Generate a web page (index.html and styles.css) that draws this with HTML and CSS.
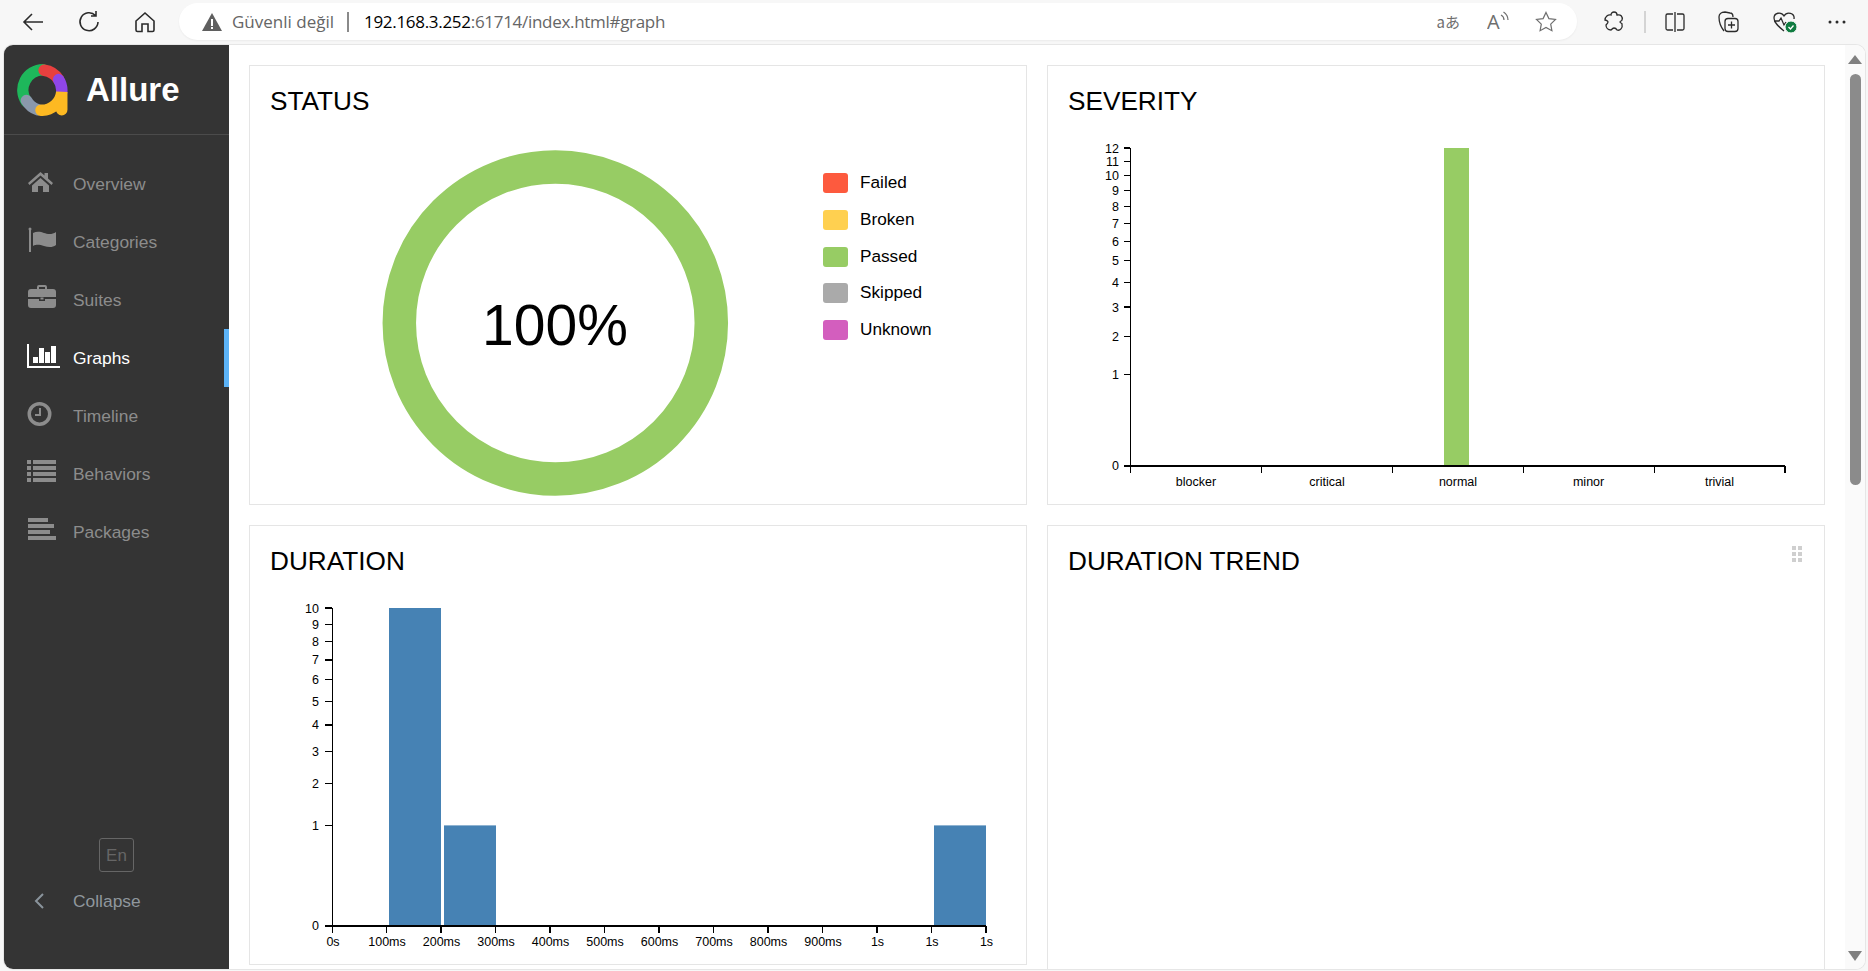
FILE: index.html
```html
<!DOCTYPE html>
<html lang="tr">
<head>
<meta charset="utf-8">
<title>Allure Report</title>
<link rel="stylesheet" href="styles.css">
</head>
<body>
<header class="toolbar">
  <div class="nav-buttons">
    <svg class="tb-icon" width="24" height="24" viewBox="0 0 24 24"><path d="M22 12H3M11 4l-8 8 8 8" class="stroke-dark"/></svg>
    <svg class="tb-icon" width="24" height="24" viewBox="0 0 24 24"><path d="M18.500 5.500A9 9 0 1 0 21 12M19 1v5h-5" class="stroke-dark"/></svg>
    <svg class="tb-icon" width="24" height="24" viewBox="0 0 24 24"><path d="M3 11l9-8 9 8v9a1.500 1.500 0 0 1-1.500 1.500H15V14H9v7.500H4.500A1.500 1.500 0 0 1 3 20z" class="stroke-dark"/></svg>
  </div>
  <div class="address">
    <svg class="warn" width="22" height="20" viewBox="0 0 22 20"><path d="M11 1l10 18H1z" fill="#5f5f5f"/><rect x="10" y="7" width="2" height="7" fill="#fff"/><rect x="10" y="15" width="2" height="2" fill="#fff"/></svg>
    <span class="insecure">Güvenli değil</span>
    <span class="url-sep"></span>
    <span class="url"><b class="host">192.168.3.252</b>:61714/index.html#graph</span>
    <span class="addr-actions">
      <span class="translate">aあ</span>
      <svg class="read-icon" width="22" height="30" viewBox="0 0 22 30"><text x="0" y="21.500" class="read-a">A</text><path d="M14 8c2 1 3 3 3 5M16.500 5c3 2 4.500 5 4.500 8" class="stroke-grey"/></svg>
      <svg class="star-icon" width="22" height="22" viewBox="0 0 22 22"><path d="M11 1.500l2.900 6.100 6.600.9-4.800 4.600 1.200 6.600-5.900-3.200-5.900 3.200 1.200-6.600L1.500 8.500l6.600-.9z" class="stroke-grey"/></svg>
    </span>
  </div>
  <div class="tb-right">
    <svg width="20" height="22" viewBox="0 0 20 22"><path d="M7 4c0-4 6-4 6 0 4-1 6 2 5 5 0 1-2 1-2 2s2 1 2 2c1 4-2 7-5 6-1-2-2-2-3-2s-2 1-3 2c-3 0-5-2-5-5 1-1 2-2 2-3S2 9 1 9c0-3 3-6 6-5z" class="stroke-dark thin"/></svg>
    <span class="tb-sep"></span>
    <svg width="22" height="22" viewBox="0 0 22 22"><path d="M9 3H3.500A1.500 1.500 0 0 0 2 4.500v13A1.500 1.500 0 0 0 3.500 19H9M13 3h5.500A1.500 1.500 0 0 1 20 4.500v13a1.500 1.500 0 0 1-1.500 1.500H13M11 1v20" class="stroke-dark thin"/></svg>
    <svg width="24" height="24" viewBox="0 0 24 24"><path d="M7 21C3 16 2 10 2 7c0-3 2-5 6-5l5 1c2 0 3 2 3 4" class="stroke-dark thin"/><rect x="8" y="8.500" width="13" height="13" rx="3" class="stroke-dark thin"/><path d="M14.500 11.500v7M11 15h7" class="stroke-dark thin"/></svg>
    <svg width="26" height="24" viewBox="0 0 26 24"><path d="M11 21C6 17 1 13 1 8c0-5 7-7 10-2 3-5 11-3 10 3M1 11h5l2-3 3 7 2-3" class="stroke-dark thin"/><circle cx="18" cy="17" r="6" fill="#107c41" stroke="#f7f7f7"/><path d="M15.500 17l2 2 3-3.500" fill="none" stroke="#fff" stroke-width="1.300"/></svg>
    <svg class="dots" width="18" height="6" viewBox="0 0 18 6"><circle cx="2" cy="3" r="1.500"/><circle cx="9" cy="3" r="1.500"/><circle cx="16" cy="3" r="1.500"/></svg>
  </div>
</header>

<div class="window">
  <aside class="sidebar">
    <div class="brand">
      <svg class="logo" width="52" height="52" viewBox="0 0 50 50">
        <g fill="none" stroke-width="11" stroke-linecap="round">
          <path d="M10 36A19.500 19.500 0 0 1 26 5.500" stroke="#1eb75b"/>
          <path d="M27 6A19.500 19.500 0 0 1 41 15" stroke="#e8403f"/>
          <path d="M41 15A19.500 19.500 0 0 1 44 27" stroke="#8f46e8"/>
          <path d="M10 35A19.500 19.500 0 0 0 21 44" stroke="#8a98ab"/>
          <path d="M24 44.500A19.500 19.500 0 0 0 44 27V44" stroke="#fdb922"/>
        </g>
      </svg>
      <span class="brand-name">Allure</span>
    </div>
    <nav class="menu">
      <a class="menu-item">
        <svg class="mi" width="34" height="32" viewBox="0 0 34 32"><path d="M13.500 4L1 15l1.500 2L13.500 7.500 24.500 17l1.500-2-5-4.500V5h-3.500v2.500z"/><path d="M5 17.500L13.500 10l8.500 7.500V24h-6v-6h-5v6H5z"/></svg>
        <span>Overview</span>
      </a>
      <a class="menu-item">
        <svg class="mi" width="34" height="32" viewBox="0 0 34 32"><rect x="2" y="3" width="2" height="23"/><circle cx="3" cy="3" r="1.500"/><path d="M6 7c4-2 8-1 11 0s8 2 12-1v13c-4 3-8 2-12 1s-7-2-11 0z"/></svg>
        <span>Categories</span>
      </a>
      <a class="menu-item">
        <svg class="mi" width="34" height="32" viewBox="0 0 34 32"><path d="M10 5V3a2 2 0 0 1 2-2h6a2 2 0 0 1 2 2v2h-2V3h-6v2z"/><path d="M4 5h22a3 3 0 0 1 3 3v5H1V8a3 3 0 0 1 3-3z"/><path d="M1 15h11v2h6v-2h11v6a3 3 0 0 1-3 3H4a3 3 0 0 1-3-3z"/><rect x="13.500" y="13.500" width="3" height="2"/></svg>
        <span>Suites</span>
      </a>
      <a class="menu-item active">
        <svg class="mi" width="34" height="32" viewBox="0 0 34 32"><rect x="0" y="2" width="2" height="24"/><rect x="0" y="24" width="33" height="2"/><rect x="6" y="15" width="5" height="6"/><rect x="12" y="6" width="5" height="15"/><rect x="18" y="10" width="5" height="11"/><rect x="24" y="4" width="5" height="17"/></svg>
        <span>Graphs</span>
      </a>
      <a class="menu-item">
        <svg class="mi" width="34" height="32" viewBox="0 0 34 32"><path fill-rule="evenodd" d="M12.500 2a12 12 0 1 1 0 24 12 12 0 0 1 0-24zm0 3.500a8.500 8.500 0 1 0 0 17 8.500 8.500 0 0 0 0-17z"/><path d="M12 8h2v8H8v-2h4z"/></svg>
        <span>Timeline</span>
      </a>
      <a class="menu-item">
        <svg class="mi" width="34" height="32" viewBox="0 0 34 32"><rect x="0" y="2" width="4" height="4"/><rect x="6" y="2" width="23" height="4"/><rect x="0" y="8" width="4" height="4"/><rect x="6" y="8" width="23" height="4"/><rect x="0" y="14" width="4" height="4"/><rect x="6" y="14" width="23" height="4"/><rect x="0" y="20" width="4" height="4"/><rect x="6" y="20" width="23" height="4"/></svg>
        <span>Behaviors</span>
      </a>
      <a class="menu-item">
        <svg class="mi" width="34" height="32" viewBox="0 0 34 32"><rect x="1" y="2" width="20" height="4"/><rect x="1" y="8" width="26" height="4"/><rect x="1" y="14" width="22" height="4"/><rect x="1" y="20" width="28" height="4"/></svg>
        <span>Packages</span>
      </a>
    </nav>
    <div class="side-foot">
      <button class="lang">En</button>
      <a class="menu-item collapse">
        <svg class="mi" width="34" height="32" viewBox="0 0 34 32"><path d="M16 9l-7 7 7 7" fill="none" stroke="#8a949c" stroke-width="2"/></svg>
        <span>Collapse</span>
      </a>
    </div>
  </aside>

  <main class="content">
    <section class="card">
      <h2 class="card-title">STATUS</h2>
      <div class="status-body">
        <svg class="donut" width="573" height="388" viewBox="0 0 573 388">
          <circle cx="305.300" cy="207" r="156" fill="none" stroke="#97cc64" stroke-width="33.500"/>
          <text x="305" y="229" class="donut-label">100%</text>
        </svg>
        <ul class="legend">
          <li><i class="swatch failed"></i><span>Failed</span></li>
          <li><i class="swatch broken"></i><span>Broken</span></li>
          <li><i class="swatch passed"></i><span>Passed</span></li>
          <li><i class="swatch skipped"></i><span>Skipped</span></li>
          <li><i class="swatch unknown"></i><span>Unknown</span></li>
        </ul>
      </div>
    </section>

    <section class="card">
      <h2 class="card-title">SEVERITY</h2>
      <svg class="chart" width="776" height="388" viewBox="0 0 776 388">
        <rect x="396" y="32" width="25" height="318" fill="#97cc64"/>
        <g class="axis">
          <path d="M82.500 32V350"/>
          <path class="base" d="M82 350H737"/>
          <path d="M76 350h6M76 258.200h6M76 220.200h6M76 191h6M76 166.400h6M76 144.700h6M76 125.100h6M76 107.100h6M76 90.400h6M76 74.600h6M76 59.700h6M76 45.500h6M76 32h6"/>
          <path d="M82.500 350v7M213.400 350v7M344.300 350v7M475.200 350v7M606.100 350v7M737 350v7"/>
        </g>
        <g class="ylabels">
          <text x="71" y="354">0</text><text x="71" y="262.500">1</text><text x="71" y="224.500">2</text><text x="71" y="195.500">3</text><text x="71" y="170.500">4</text><text x="71" y="149">5</text><text x="71" y="129.500">6</text><text x="71" y="111.500">7</text><text x="71" y="94.500">8</text><text x="71" y="79">9</text><text x="71" y="64">10</text><text x="71" y="50">11</text><text x="71" y="36.500">12</text>
        </g>
        <g class="xlabels">
          <text x="148" y="369.500">blocker</text><text x="279" y="369.500">critical</text><text x="410" y="369.500">normal</text><text x="540.600" y="369.500">minor</text><text x="671.500" y="369.500">trivial</text>
        </g>
      </svg>
    </section>

    <section class="card">
      <h2 class="card-title">DURATION</h2>
      <svg class="chart" width="776" height="388" viewBox="0 0 776 388">
        <g fill="#4682b4">
          <rect x="139" y="32" width="52" height="318"/>
          <rect x="194" y="249.400" width="52" height="100.600"/>
          <rect x="684" y="249.400" width="52" height="100.600"/>
        </g>
        <g class="axis">
          <path d="M82.500 32V350"/>
          <path class="base" d="M82 350H736"/>
          <path d="M75 350h7M75 249.400h7M75 207.800h7M75 175.800h7M75 148.900h7M75 125.100h7M75 103.700h7M75 84h7M75 65.600h7M75 48.300h7M75 32h7"/>
          <path d="M82.500 350v7M136.500 350v7M191 350v7M245.500 350v7M300 350v7M354.500 350v7M409 350v7M463.500 350v7M518 350v7M572.500 350v7M627 350v7M681.500 350v7M736 350v7"/>
        </g>
        <g class="ylabels">
          <text x="69" y="354">0</text><text x="69" y="253.500">1</text><text x="69" y="212">2</text><text x="69" y="180">3</text><text x="69" y="153">4</text><text x="69" y="129.500">5</text><text x="69" y="108">6</text><text x="69" y="88">7</text><text x="69" y="70">8</text><text x="69" y="52.500">9</text><text x="69" y="36.500">10</text>
        </g>
        <g class="xlabels">
          <text x="83" y="369.500">0s</text><text x="137" y="369.500">100ms</text><text x="191.500" y="369.500">200ms</text><text x="246" y="369.500">300ms</text><text x="300.500" y="369.500">400ms</text><text x="355" y="369.500">500ms</text><text x="409.500" y="369.500">600ms</text><text x="464" y="369.500">700ms</text><text x="518.500" y="369.500">800ms</text><text x="573" y="369.500">900ms</text><text x="627.500" y="369.500">1s</text><text x="682" y="369.500">1s</text><text x="736.500" y="369.500">1s</text>
        </g>
      </svg>
    </section>

    <section class="card card-tall">
      <div class="card-head">
        <h2 class="card-title">DURATION TREND</h2>
        <div class="drag-handle"><i></i><i></i><i></i><i></i><i></i><i></i></div>
      </div>
    </section>
  </main>

  <div class="scrollbar">
    <span class="arrow-up"></span>
    <span class="thumb"></span>
    <span class="arrow-down"></span>
  </div>
</div>
</body>
</html>
```
FILE: styles.css
```css
* { box-sizing: border-box; }
html, body { margin: 0; height: 100%; }
body {
  width: 1868px;
  height: 971px;
  overflow: hidden;
  background: #f7f7f7;
  font-family: "Liberation Sans", Arial, sans-serif;
  color: #000;
}

/* browser chrome */
.toolbar {
  height: 45px;
  display: flex;
  align-items: flex-start;
  padding: 3px 0 0 21px;
}
.nav-buttons {
  flex: none;
  display: flex;
  gap: 32px;
  width: 158px;
  padding-top: 7px;
}
.tb-icon { flex: none; }
.stroke-dark { fill: none; stroke: #2b2b2b; stroke-width: 1.6; }
.stroke-dark.thin { stroke-width: 1.3; }
.stroke-grey { fill: none; stroke: #6e6e6e; stroke-width: 1.2; }
.address {
  flex: none;
  width: 1398px;
  height: 37px;
  border-radius: 18.5px;
  background: #fff;
  box-shadow: 0 1px 2px rgba(0, 0, 0, .05);
  display: flex;
  align-items: center;
  padding-left: 22px;
  font-family: "Open Sans", sans-serif;
  font-size: 17px;
  color: #666;
}
.warn { flex: none; margin-right: 9px; }
.url-sep {
  width: 2px;
  height: 20px;
  background: #8a8a8a;
  margin: 0 15px 0 13px;
}
.url { letter-spacing: -.3px; }
.host { font-weight: 400; color: #000; }
.addr-actions {
  margin-left: auto;
  margin-right: 20px;
  display: flex;
  align-items: center;
}
.read-icon { margin-left: 27px; }
.star-icon { margin-left: 26px; }
.translate {
  font-family: "Noto Sans CJK JP", "Open Sans", sans-serif;
  font-size: 15px;
  color: #6e6e6e;
}
.read-a {
  font-family: "Open Sans", sans-serif;
  font-size: 20px;
  fill: #6e6e6e;
}
.tb-right {
  flex: none;
  display: flex;
  align-items: center;
  height: 37px;
  margin-left: 27px;
}
.tb-sep { width: 2px; height: 22px; background: #d4d4d4; margin: 0 18px 0 20px; }
.tb-right svg:nth-of-type(3) { margin-left: 31px; }
.tb-right svg:nth-of-type(4) { margin-left: 32px; }
.tb-right .dots { margin-left: 29px; fill: #2b2b2b; }

/* window */
.window {
  width: 1861px;
  height: 924px;
  margin-left: 4px;
  display: flex;
  background: #fff;
  border-radius: 9px;
  overflow: hidden;
  box-shadow: 0 0 0 1px #e6e6e6;
}
.sidebar {
  flex: none;
  width: 225px;
  background: #343434;
  display: flex;
  flex-direction: column;
  padding-bottom: 39px;
}
.brand {
  height: 90px;
  border-bottom: 1px solid #4b4b4b;
  display: flex;
  align-items: center;
  padding-left: 12px;
  gap: 18px;
}
.logo { flex: none; }
.brand-name { color: #fff; font-size: 33px; font-weight: 700; }
.menu { margin-top: 20px; }
.menu-item {
  height: 58px;
  display: flex;
  align-items: center;
  gap: 12px;
  padding-left: 23px;
  font-size: 17.4px;
  color: #8c8c8c;
}
.mi { flex: none; fill: #8c8c8c; }
.menu-item.active { color: #fff; box-shadow: inset -5px 0 0 #5cb3f7; }
.menu-item.active .mi { fill: #fff; }
.side-foot { margin-top: auto; display: flex; flex-direction: column; }
.lang {
  align-self: center;
  width: 35px;
  height: 34px;
  padding: 1px 0 0;
  background: none;
  border: 1px solid #666;
  border-radius: 3px;
  color: #666;
  font: 17px "Liberation Sans", Arial, sans-serif;
}
.collapse { color: #8f979d; }

/* content */
.content {
  flex: 1;
  min-width: 0;
  padding: 20px;
  display: grid;
  grid-template-columns: 1fr 1fr;
  grid-auto-rows: 440px;
  gap: 20px;
}
.card {
  border: 1px solid #e5e5e5;
  background: #fff;
  min-width: 0;
}
.card-tall { height: 480px; }
.card-title {
  margin: 0;
  padding: 20px 20px 0;
  height: 50px;
  font-size: 26.2px;
  line-height: 30px;
  font-weight: 400;
}
.card-head { display: flex; justify-content: space-between; }
.drag-handle {
  display: grid;
  grid-template-columns: 4px 4px;
  grid-auto-rows: 4px;
  gap: 2px;
  margin: 20px 22px 0 0;
}
.drag-handle i { background: #cfcfcf; }
.status-body { display: flex; }
.donut, .chart { display: block; flex: none; }
.donut-label {
  font-size: 57px;
  text-anchor: middle;
  fill: #000;
}
.legend {
  list-style: none;
  margin: 0;
  padding: 57px 0 0;
  font-size: 17.2px;
}
.legend li {
  height: 36.75px;
  display: flex;
  align-items: flex-start;
  gap: 12px;
  line-height: 18px;
}
.swatch { width: 25px; height: 20px; border-radius: 3px; flex: none; }
.failed { background: #fd5a3e; }
.broken { background: #ffd050; }
.passed { background: #97cc64; }
.skipped { background: #aaa; }
.unknown { background: #d35ebe; }

.axis path { fill: none; stroke: #000; stroke-width: 1.2; shape-rendering: crispEdges; }
.axis .base { stroke-width: 2; }
.ylabels text { text-anchor: end; font-size: 12.5px; }
.xlabels text { text-anchor: middle; font-size: 12.5px; }

/* scrollbar */
.scrollbar {
  flex: none;
  width: 20px;
  background: #fafafa;
  display: flex;
  flex-direction: column;
  align-items: center;
  padding: 10px 0 8px;
}
.arrow-up, .arrow-down {
  width: 0;
  height: 0;
  border-left: 7px solid transparent;
  border-right: 7px solid transparent;
}
.arrow-up { border-bottom: 9px solid #808080; }
.arrow-down { border-top: 10px solid #808080; margin-top: auto; }
.thumb {
  width: 11px;
  height: 411px;
  margin-top: 10px;
  border-radius: 6px;
  background: #8b8b8b;
}
```
